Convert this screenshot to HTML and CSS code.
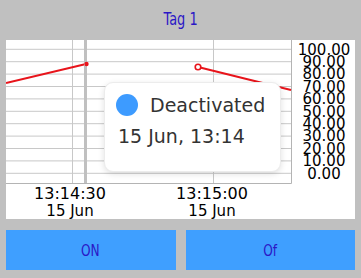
FILE: index.html
```html
<!DOCTYPE html>
<html lang="en">
<head>
  <meta charset="UTF-8" />
  <meta name="viewport" content="width=device-width, initial-scale=1.0" />
  <title>Tag 1</title>
  <link rel="stylesheet" href="styles.css">
</head>
<body>
  <div class="screen">
    <div class="header"><span class="narrow">Tag 1</span></div>

    <div class="chart">
      <svg class="plot" width="349" height="179" viewBox="0 0 349 179">
        <g class="grid">
          <line x1="0" y1="9.3" x2="285" y2="9.3" />
          <line x1="0" y1="21.7" x2="285" y2="21.7" />
          <line x1="0" y1="34.1" x2="285" y2="34.1" />
          <line x1="0" y1="46.5" x2="285" y2="46.5" />
          <line x1="0" y1="58.9" x2="285" y2="58.9" />
          <line x1="0" y1="71.3" x2="285" y2="71.3" />
          <line x1="0" y1="83.7" x2="285" y2="83.7" />
          <line x1="0" y1="96.1" x2="285" y2="96.1" />
          <line x1="0" y1="108.5" x2="285" y2="108.5" />
          <line x1="0" y1="120.9" x2="285" y2="120.9" />
          <line x1="0" y1="133.3" x2="285" y2="133.3" />
          <line x1="66.5" y1="0" x2="66.5" y2="143" />
          <line x1="207.5" y1="0" x2="207.5" y2="143" />
        </g>
        <line class="axis" x1="0" y1="143.5" x2="285.5" y2="143.5" />
        <line class="axis" x1="285.5" y1="0" x2="285.5" y2="143.5" />

        <polyline class="series" points="0,43 80,24" />
        <polyline class="series" points="192,27 285,50" />
        <circle class="dot" cx="192" cy="27" r="2.8" />
        <line class="cursor" x1="79.5" y1="0" x2="79.5" y2="143" />
        <circle class="dot-fill" cx="80.5" cy="24" r="2.2" />

        <g class="ylabels">
          <text x="318" y="14.6">100.00</text>
          <text x="318" y="27">90.00</text>
          <text x="318" y="39.4">80.00</text>
          <text x="318" y="51.8">70.00</text>
          <text x="318" y="64.2">60.00</text>
          <text x="318" y="76.6">50.00</text>
          <text x="318" y="89">40.00</text>
          <text x="318" y="101.4">30.00</text>
          <text x="318" y="113.8">20.00</text>
          <text x="318" y="126.2">10.00</text>
          <text x="318" y="138.6">0.00</text>
        </g>

        <g class="xlabels">
          <text class="time" x="64" y="159.3">13:14:30</text>
          <text class="date" x="64" y="176">15 Jun</text>
          <text class="time" x="206" y="159.3">13:15:00</text>
          <text class="date" x="206" y="176">15 Jun</text>
        </g>
      </svg>

      <div class="tooltip">
        <div class="tip-row">
          <span class="tip-dot"></span>
          <span class="tip-state">Deactivated</span>
        </div>
        <div class="tip-time">15 Jun, 13:14</div>
      </div>
    </div>

    <div class="buttons">
      <button class="btn"><span class="narrow">ON</span></button>
      <button class="btn"><span class="narrow">Of</span></button>
    </div>
  </div>
</body>
</html>
```

FILE: styles.css
```css
html, body {
  margin: 0;
  padding: 0;
}
body {
  background-color: #c0c0c0;
  font-family: 'DejaVu Sans', sans-serif;
}
.screen {
  width: 361px;
  height: 278px;
  overflow: hidden;
}
.header {
  height: 40px;
  line-height: 38px;
  text-align: center;
  color: #2b17c6;
  font-size: 17px;
}
.narrow {
  display: inline-block;
  transform: scaleX(0.76);
}
.chart {
  position: relative;
  margin: 0 6px;
  height: 179px;
  background-color: #fff;
}
.plot {
  display: block;
}
.grid line {
  stroke: #c8c8c8;
  stroke-width: 1;
}
.axis {
  stroke: #b4b4b4;
  stroke-width: 1;
}
.cursor {
  stroke: #c0c0c0;
  stroke-width: 3;
}
.series {
  fill: none;
  stroke: #e8141b;
  stroke-width: 2;
}
.dot {
  fill: #fff;
  stroke: #e8141b;
  stroke-width: 1.6;
}
.dot-fill {
  fill: #e8141b;
}
.ylabels text {
  font-family: 'DejaVu Sans', sans-serif;
  font-size: 15px;
  text-anchor: middle;
  fill: #000;
}
.xlabels text {
  font-family: 'DejaVu Sans', sans-serif;
  text-anchor: middle;
  fill: #000;
}
.xlabels .time {
  font-size: 16px;
}
.xlabels .date {
  font-size: 15px;
}
.tooltip {
  position: absolute;
  left: 98px;
  top: 42px;
  width: 177px;
  height: 90px;
  box-sizing: border-box;
  padding: 11px 0 0 11px;
  background-color: #fff;
  border: 1px solid #ececec;
  border-radius: 9px;
  box-shadow: 0 2px 6px rgba(0, 0, 0, 0.12);
  color: #333;
}
.tip-row {
  display: flex;
  align-items: center;
  gap: 12px;
}
.tip-dot {
  width: 22px;
  height: 22px;
  border-radius: 50%;
  background-color: #3d9bff;
}
.tip-state {
  font-size: 19px;
}
.tip-time {
  margin-top: 9px;
  margin-left: 2px;
  font-size: 19px;
}
.buttons {
  display: flex;
  gap: 10px;
  padding: 0 6px;
  margin-top: 11px;
}
.btn {
  flex: 1;
  height: 40px;
  border: none;
  padding: 0;
  background-color: #3f9fff;
  color: #2b17c6;
  font-family: 'DejaVu Sans', sans-serif;
  font-size: 16px;
}
```
